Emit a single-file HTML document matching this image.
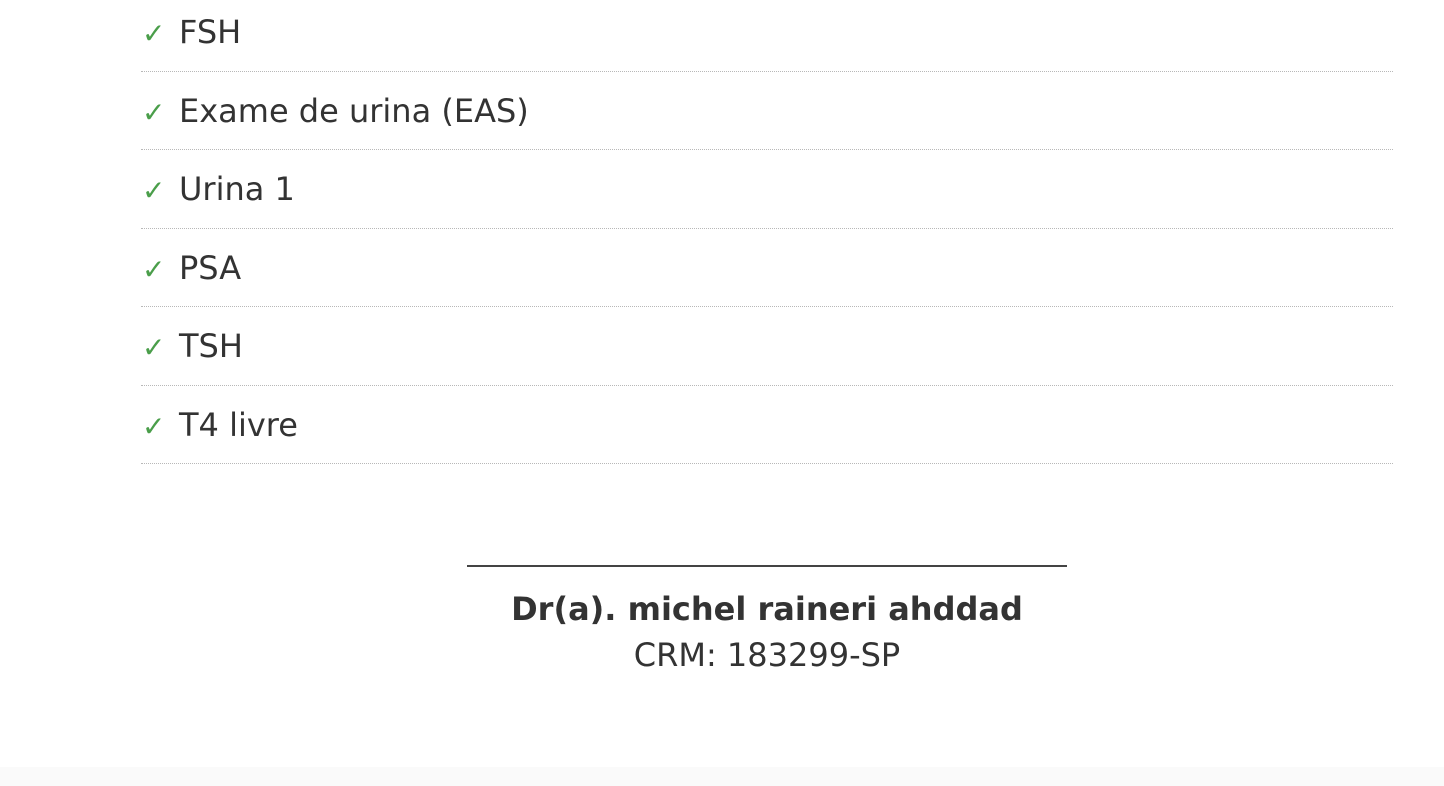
<!DOCTYPE html>
<html><head><meta charset="utf-8"><style>
html,body{margin:0;padding:0;background:#fafafa;width:1444px;height:786px;overflow:hidden;font-family:"DejaVu Sans","Liberation Sans",sans-serif;color:#333;}
.page{position:absolute;left:0;top:0;width:1444px;height:767px;background:#fff;}
.list{position:absolute;left:141px;top:-7px;width:1252px;}
.row{padding:21px 0 20.5px 0;border-bottom:1px dotted #b8b8b8;font-size:32px;line-height:36px;height:36px;white-space:nowrap;}
.ck{color:#4a9e4a;font-size:28px;display:inline-block;width:38px;padding-left:1px;box-sizing:border-box;}
.sig{position:absolute;left:467px;top:565px;width:600px;border-top:2px solid #444;}
.name{position:absolute;left:0;width:1534px;top:589px;text-align:center;font-weight:bold;font-size:32px;line-height:40px;}
.crm{position:absolute;left:0;width:1534px;top:635px;text-align:center;font-size:32px;line-height:40px;}
</style></head><body><div class="page">
<div class="list">
<div class="row"><span class="ck">✓</span>FSH</div>
<div class="row"><span class="ck">✓</span>Exame de urina (EAS)</div>
<div class="row"><span class="ck">✓</span>Urina 1</div>
<div class="row"><span class="ck">✓</span>PSA</div>
<div class="row"><span class="ck">✓</span>TSH</div>
<div class="row"><span class="ck">✓</span>T4 livre</div>
</div>
<div class="sig"></div>
<div class="name">Dr(a). michel raineri ahddad</div>
<div class="crm">CRM: 183299-SP</div>
</div></body></html>
